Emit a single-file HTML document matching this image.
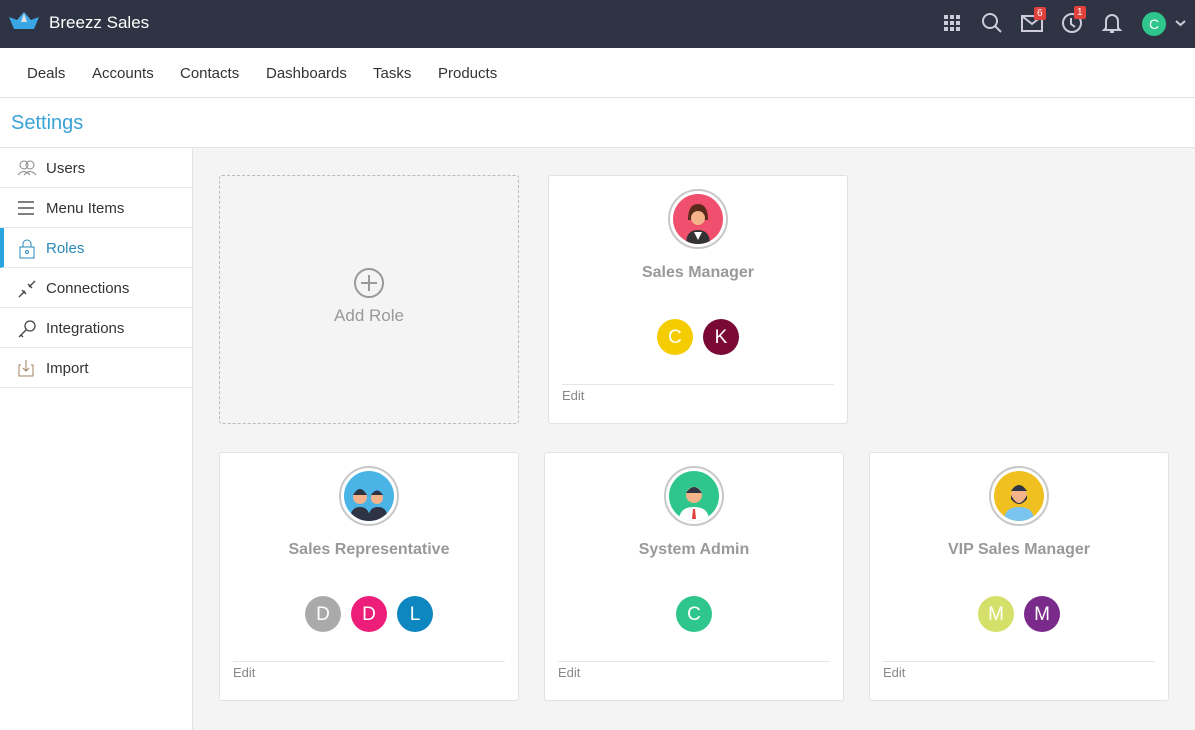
<!DOCTYPE html><html><head><meta charset="utf-8"><style>
*{box-sizing:border-box;margin:0;padding:0}
body{width:1195px;height:730px;overflow:hidden;font-family:"Liberation Sans",sans-serif;background:#f4f4f4;position:relative}
.top{position:absolute;left:0;top:0;width:1195px;height:48px;background:#2e3443}
.brand{position:absolute;left:49px;top:13px;color:#fff;font-size:17px}
.nav{position:absolute;top:48px;left:0;width:1195px;height:50px;background:#fff;border-bottom:1px solid #e2e2e2}
.nav span{position:absolute;top:17px;font-size:15px;color:#333}
.set{position:absolute;top:98px;left:0;width:1195px;height:50px;background:#fff;border-bottom:1px solid #e2e2e2}
.set span{position:absolute;left:11px;top:14px;font-size:20px;color:#3aa3d8}
.side{position:absolute;top:148px;left:0;width:193px;height:582px;background:#fff;border-right:1px solid #e2e2e2}
.si{height:40px;border-bottom:1px solid #e8e8e8;position:relative;font-size:15px;color:#333}
.si span{position:absolute;left:46px;top:12px}
.si svg{position:absolute;left:17px;top:11px}
.card{position:absolute;width:300px;height:249px;background:#fff;border:1px solid #e2e2e2;border-radius:3px}
.av{position:absolute;left:119px;top:13px;width:60px;height:60px;border-radius:50%;border:2px solid #c8c8c8;background:#fff;padding:3px}
.av div{width:100%;height:100%;border-radius:50%;overflow:hidden;position:relative}
.av svg{position:absolute;left:0;top:0}
.t{position:absolute;top:88px;width:100%;text-align:center;font-size:16px;font-weight:bold;color:#999}
.ms{position:absolute;top:143px;width:100%;text-align:center;font-size:0}
.m{display:inline-block;width:36px;height:36px;border-radius:50%;color:#fff;font-size:19px;line-height:38px;margin:0 5px}
.hr{position:absolute;left:13px;right:13px;top:208px;border-top:1px solid #e6e6e6}
.ed{position:absolute;left:13px;top:212px;font-size:13px;color:#888}
.badge{position:absolute;background:#e0413c;color:#fff;font-size:10px;padding:0 3px;border-radius:2px;line-height:13px}
</style></head><body>
<div class="top">
<svg style="position:absolute;left:9px;top:12px" width="30" height="18"><polygon points="0,5 8,8 15,0 22,8 30,5 25,17 5,17" fill="#3aa6e6"/><polygon points="12,10 15,1 18,10" fill="#ddd"/></svg>
<div class="brand">Breezz Sales</div>
<svg style="position:absolute;left:944px;top:15px" width="16" height="16" fill="#ccd"><rect x="0" y="0" width="4" height="4"/><rect x="6" y="0" width="4" height="4"/><rect x="12" y="0" width="4" height="4"/><rect x="0" y="6" width="4" height="4"/><rect x="6" y="6" width="4" height="4"/><rect x="12" y="6" width="4" height="4"/><rect x="0" y="12" width="4" height="4"/><rect x="6" y="12" width="4" height="4"/><rect x="12" y="12" width="4" height="4"/></svg>
<svg style="position:absolute;left:981px;top:12px" width="22" height="22" fill="none" stroke="#ccd" stroke-width="2"><circle cx="9" cy="9" r="7"/><line x1="14" y1="14" x2="20" y2="20"/></svg>
<svg style="position:absolute;left:1021px;top:15px" width="22" height="17" fill="none" stroke="#ccd" stroke-width="2"><rect x="1" y="1" width="20" height="15"/><polyline points="1,1 11,9 21,1"/></svg>
<div class="badge" style="left:1034px;top:7px">6</div>
<svg style="position:absolute;left:1061px;top:12px" width="22" height="22" fill="none" stroke="#ccd" stroke-width="2"><circle cx="11" cy="11" r="9"/><polyline points="10,6 10,12 14,15"/></svg>
<div class="badge" style="left:1074px;top:6px">1</div>
<svg style="position:absolute;left:1102px;top:12px" width="20" height="22" fill="none" stroke="#ccd" stroke-width="2"><path d="M4 16 V9 a6 6 0 0 1 12 0 V16 L18 18 H2 Z M8 20 h4"/></svg>
<div style="position:absolute;left:1142px;top:12px;width:24px;height:24px;border-radius:50%;background:#2ec68c;color:#fff;font-size:14px;text-align:center;line-height:24px">C</div>
<svg style="position:absolute;left:1175px;top:20px" width="11" height="8" fill="none" stroke="#ccd" stroke-width="2"><polyline points="1,1 5.5,5 10,1"/></svg>
</div>
<div class="nav"><span style="left:27px">Deals</span><span style="left:92px">Accounts</span><span style="left:180px">Contacts</span><span style="left:266px">Dashboards</span><span style="left:373px">Tasks</span><span style="left:438px">Products</span></div>
<div class="set"><span>Settings</span></div>
<div class="side">
<div class="si"><svg width="20" height="18" fill="none" stroke="#888"><circle cx="7" cy="6" r="4"/><circle cx="13" cy="6" r="4"/><path d="M1 16 q6-7 12 0 M7 16 q6-7 12 0"/></svg><span>Users</span></div>
<div class="si"><svg width="18" height="18" stroke="#555" stroke-width="1.5"><line x1="1" y1="3" x2="17" y2="3"/><line x1="1" y1="9" x2="17" y2="9"/><line x1="1" y1="15" x2="17" y2="15"/></svg><span>Menu Items</span></div>
<div class="si" style="border-left:4px solid #2aa4dc"><svg style="left:14px" width="18" height="20" fill="none" stroke="#2a8ab8"><rect x="2" y="8" width="14" height="11"/><path d="M5 8 V5 a4 4 0 0 1 8 0 V8"/><circle cx="9" cy="13" r="1.5"/></svg><span style="left:42px;color:#2a8ab8">Roles</span></div>
<div class="si"><svg width="20" height="20" fill="none" stroke="#444" stroke-width="1.4"><path d="M2 18 L8 12 M12 8 L18 2 M5 11 l4 4 M11 5 l4 4"/></svg><span>Connections</span></div>
<div class="si"><svg width="20" height="20" fill="none" stroke="#444" stroke-width="1.3"><circle cx="13" cy="7" r="5"/><path d="M9 11 L2 18 M4 16 l2 2"/></svg><span>Integrations</span></div>
<div class="si"><svg width="18" height="18" fill="none" stroke="#a08060"><path d="M4 6 H2 V17 H16 V6 H14 M9 1 V12 M6 9 l3 3 3-3"/></svg><span>Import</span></div>
</div>
<div class="card" style="left:219px;top:175px;border:1px dashed #bbb;background:#f4f4f4"><svg style="position:absolute;left:133px;top:91px" width="32" height="32" fill="none" stroke="#999" stroke-width="2"><circle cx="16" cy="16" r="14"/><path d="M16 8v16M8 16h16"/></svg><div style="position:absolute;top:130px;width:100%;text-align:center;font-size:17px;color:#999">Add Role</div></div>
<div class="card" style="left:548px;top:175px"><div class="av"><div style="background:#f0506e"><svg width="50" height="50"><path d="M13 50 q0-14 12-14 q12 0 12 14Z" fill="#333"/><path d="M21 38 h8 l-4 8z" fill="#fff"/><path d="M15 26 q0-16 10-16 q10 0 10 16 z" fill="#5a2a1a"/><circle cx="25" cy="24" r="7" fill="#f5b38a"/></svg></div></div><div class="t">Sales Manager</div><div class="ms"><span class="m" style="background:#f5cc00">C</span><span class="m" style="background:#7a0a35">K</span></div><div class="hr"></div><div class="ed">Edit</div></div>
<div class="card" style="left:219px;top:452px"><div class="av"><div style="background:#4ab4e6"><svg width="50" height="50"><path d="M6 50 q0-14 10-14 q10 0 10 14Z M24 50 q0-14 10-14 q10 0 10 14Z" fill="#2e3443"/><circle cx="16" cy="26" r="7" fill="#f5b38a"/><circle cx="33" cy="27" r="6" fill="#f5b38a"/><path d="M9 24 q7-12 14 0z M27 24 q6-9 12 0z" fill="#2e3443"/></svg></div></div><div class="t">Sales Representative</div><div class="ms"><span class="m" style="background:#aaa">D</span><span class="m" style="background:#ec1e79">D</span><span class="m" style="background:#0e86c0">L</span></div><div class="hr"></div><div class="ed">Edit</div></div>
<div class="card" style="left:544px;top:452px"><div class="av"><div style="background:#2ec68c"><svg width="50" height="50"><path d="M10 50 q0-14 15-14 q15 0 15 14Z" fill="#fff"/><path d="M24 38 h2 l1 10 h-4z" fill="#e0413c"/><circle cx="25" cy="24" r="8" fill="#f5b38a"/><path d="M17 22 q8-12 16 0z" fill="#2e3443"/></svg></div></div><div class="t">System Admin</div><div class="ms"><span class="m" style="background:#2ec68c">C</span></div><div class="hr"></div><div class="ed">Edit</div></div>
<div class="card" style="left:869px;top:452px"><div class="av"><div style="background:#f0c020"><svg width="50" height="50"><path d="M10 50 q0-14 15-14 q15 0 15 14Z" fill="#7ac4f0"/><circle cx="25" cy="24" r="8" fill="#f5b38a"/><path d="M17 24 q8 16 16 0 v4 q-8 10 -16 0z M17 20 q8-12 16 0z" fill="#2e3443"/></svg></div></div><div class="t">VIP Sales Manager</div><div class="ms"><span class="m" style="background:#d4e06a">M</span><span class="m" style="background:#7a2a8a">M</span></div><div class="hr"></div><div class="ed">Edit</div></div>
</body></html>
